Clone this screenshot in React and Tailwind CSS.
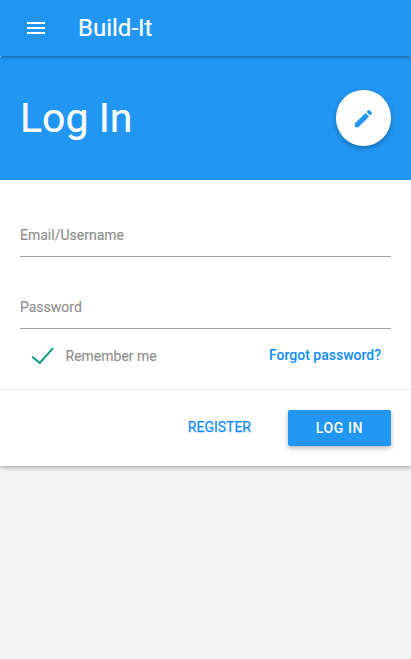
function Field({ label }) {
  return (
    <label className="flex h-[43px] items-start border-b border-[#9e9e9e] pt-[10px]">
      <span className="text-sm leading-[22px] text-[#8c8c8c] [-webkit-text-stroke:0.1px_#8c8c8c]">{label}</span>
    </label>
  );
}

export default function App() {
  return (
    <div className="flex h-[659px] w-full flex-col overflow-hidden bg-[#f4f4f4] font-['Roboto',sans-serif]">
      <nav className="relative z-10 flex h-14 shrink-0 items-center bg-[#2196f3] pl-6 text-white shadow-[0_1px_4px_rgba(0,0,0,0.4)]">
        <svg className="size-6" viewBox="0 0 24 24" fill="currentColor">
          <path d="M3 18h18v-2H3v2zm0-5h18v-2H3v2zm0-7v2h18V6H3z" />
        </svg>
        <span className="ml-[30px] text-[24px] leading-8 [-webkit-text-stroke:0.2px_white]">Build-It</span>
      </nav>
      <main className="rounded-xs bg-white shadow-[0_1px_5px_rgba(0,0,0,0.4)]">
        <header className="flex h-[124px] items-center justify-between rounded-t-xs bg-[#2196f3] px-5 text-white">
          <h1 className="text-[41px] leading-[50px] [-webkit-text-stroke:0.2px_white]">Log In</h1>
          <button className="flex h-14 w-[55px] items-center justify-center rounded-full bg-white text-[#2196f3] shadow-[0_2px_5px_rgba(0,0,0,0.3)]">
            <svg className="size-[23px]" viewBox="0 0 24 24" fill="currentColor">
              <path d="M3 17.25V21h3.75L17.81 9.94l-3.75-3.75L3 17.25zM20.71 7.04a1 1 0 0 0 0-1.41l-2.34-2.34a1 1 0 0 0-1.41 0l-1.83 1.83 3.75 3.75 1.83-1.83z" />
            </svg>
          </button>
        </header>
        <form className="flex h-[209px] flex-col px-5 pt-[34px]">
          <Field label="Email/Username" />
          <div className="h-[29px]" />
          <Field label="Password" />
          <div className="mt-[15px] flex items-start justify-between pl-[11px] pr-2.5 text-sm leading-[22px]">
            <span className="flex items-center pt-px text-[#8c8c8c] [-webkit-text-stroke:0.1px_#8c8c8c]">
              <svg className="mr-[11.5px] h-[18px] w-[23px]" viewBox="0 0 23 18" fill="none" stroke="#009688" strokeWidth="1.9">
                <path d="M1.2 9.7l7.6 6.2L22 1.2" />
              </svg>
              Remember me
            </span>
            <a className="font-medium text-[#0f8bf8]">Forgot password?</a>
          </div>
        </form>
        <footer className="flex h-[77px] items-center justify-end border-t border-[#e6e6e6] pr-5 text-sm">
          <a className="mr-[37px] pb-[2px] text-[#0f8bf8] [-webkit-text-stroke:0.25px_#0f8bf8]">REGISTER</a>
          <button className="h-9 w-[103px] rounded-xs bg-[#2196f3] pb-px font-medium tracking-[0.6px] text-white shadow-[0_2px_5px_rgba(0,0,0,0.3)]">LOG IN</button>
        </footer>
      </main>
    </div>
  );
}
